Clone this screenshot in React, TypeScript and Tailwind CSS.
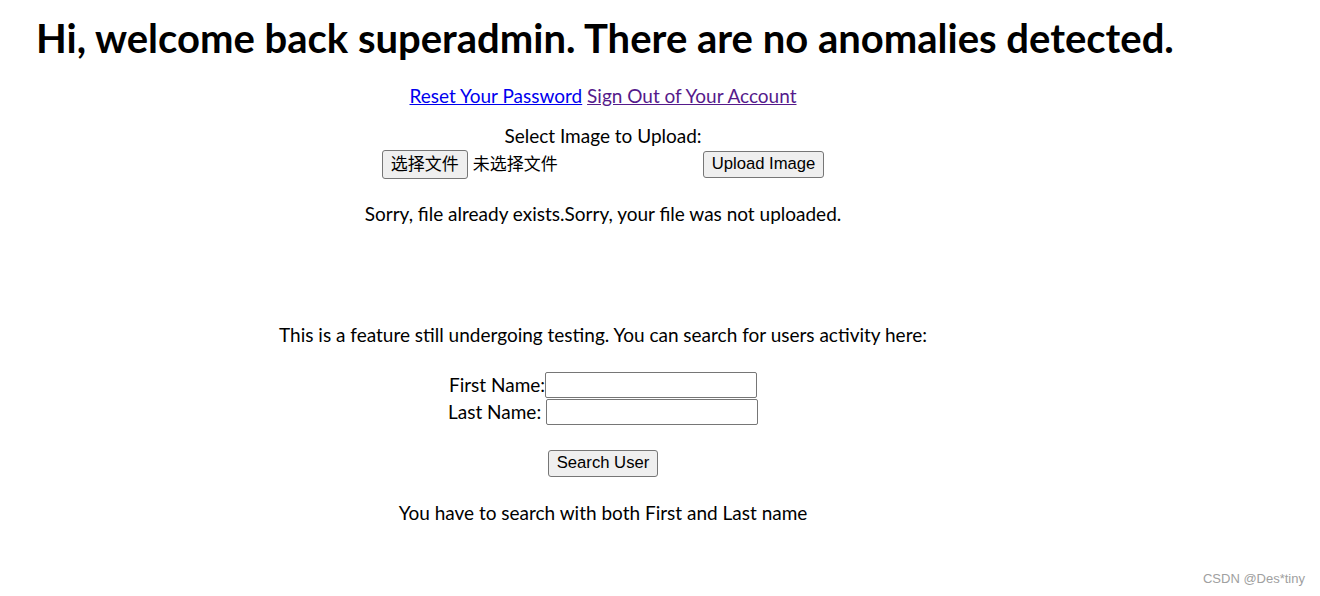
const yahei = "font-['Lato','Noto_Sans_CJK_SC',sans-serif]";
const ctrl = "font-['Liberation_Sans','Noto_Sans_CJK_SC',sans-serif]";

const FileInput = () => (
  <div className="flex items-center w-[316px]">
    <button
      className={`h-[29px] px-[8px] border border-[#767676] rounded-[3px] bg-[#efefef] text-[17px] text-black leading-none ${ctrl}`}
    >
      选择文件
    </button>
    <span className={`ml-[5px] text-[17px] text-black ${ctrl}`}>未选择文件</span>
  </div>
);

const App = () => {
  return (
    <div className={`relative w-[1320px] h-[596px] bg-white text-black overflow-hidden ${yahei}`}>
      <h1 className="pl-[36px] pt-[14px] text-[40px] leading-[48px] font-bold">
        Hi, welcome back superadmin. There are no anomalies detected.
      </h1>

      <div className="w-[1206px] flex flex-col items-center text-[19px]">
        {/* 계정 링크 */}
        <div className="mt-[22px] leading-[24px]">
          <a href="#" className="text-[#0000ee] underline">
            Reset Your Password
          </a>{" "}
          <a href="#" className="text-[#551a8b] underline">
            Sign Out of Your Account
          </a>
        </div>

        {/* 이미지 업로드 */}
        <div className="mt-[16px] leading-[24px]">Select Image to Upload:</div>
        <div className="mt-[2px] flex items-center gap-[5px]">
          <FileInput />
          <button
            className={`h-[27px] px-[8px] border border-[#767676] rounded-[3px] bg-[#efefef] text-[16.67px] leading-none ${ctrl}`}
          >
            Upload Image
          </button>
        </div>
        <div className="mt-[23px] leading-[24px]">
          Sorry, file already exists.Sorry, your file was not uploaded.
        </div>

        {/* 사용자 검색 */}
        <div className="mt-[97px] leading-[24px]">
          This is a feature still undergoing testing. You can search for users activity here:
        </div>
        <div className="mt-[25px] flex flex-col items-center gap-[1px]">
          <div className="flex items-center">
            <span className="leading-[24px]">First Name:</span>
            <input className="w-[212px] h-[26px] border border-[#767676] rounded-[2px] bg-white" />
          </div>
          <div className="flex items-center">
            <span className="leading-[24px]">Last Name:&nbsp;</span>
            <input className="w-[212px] h-[26px] border border-[#767676] rounded-[2px] bg-white" />
          </div>
        </div>
        <button
          className={`mt-[25px] h-[27px] px-[8px] border border-[#767676] rounded-[3px] bg-[#efefef] text-[16.67px] leading-none ${ctrl}`}
        >
          Search User
        </button>
        <div className="mt-[24px] leading-[24px]">
          You have to search with both First and Last name
        </div>
      </div>

      <div className={`absolute right-[15px] bottom-[8px] text-[13px] text-[#a0a0a0] ${ctrl}`}>
        CSDN @Des*tiny
      </div>
    </div>
  );
};

export default App;
